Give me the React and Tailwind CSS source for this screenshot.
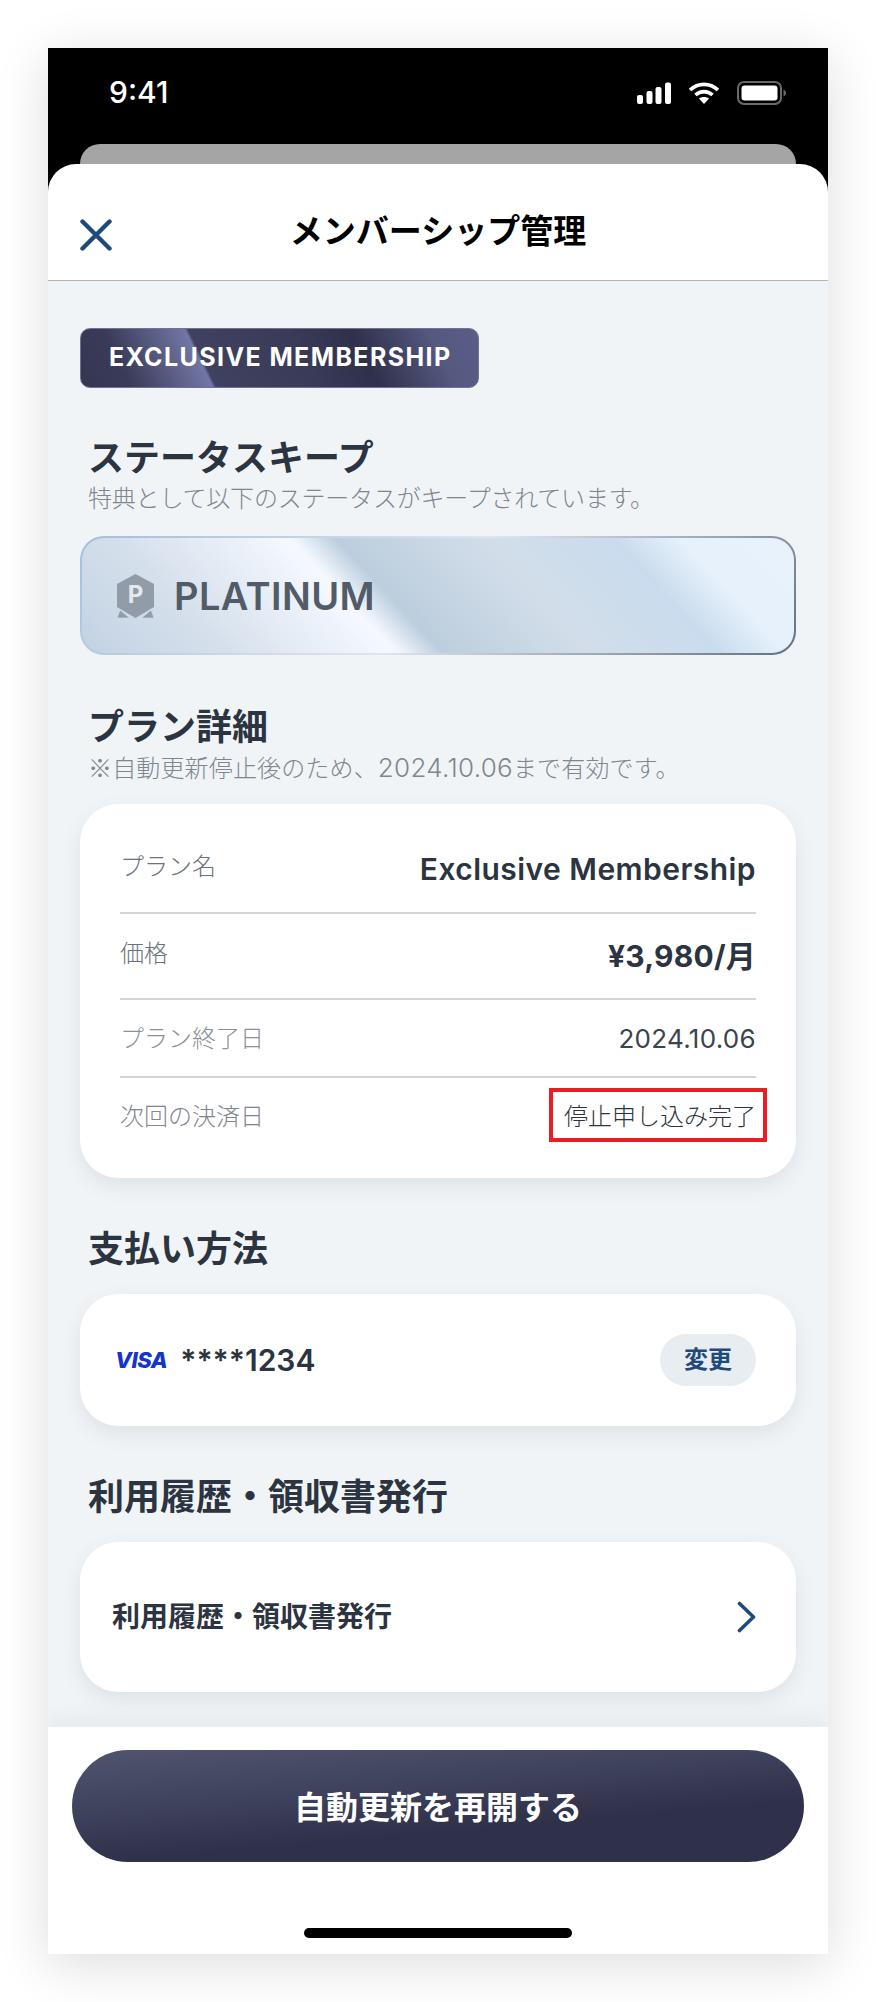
const detailRows = [
  { label: 'プラン名', value: 'Exclusive Membership', row: 'h-[90px] border-b-2', labelCls: 'text-[#6b727a] -mt-[2px]', valueCls: 'text-[30px] font-semibold tracking-[0.45px] text-[#2b3440] mt-[2px]' },
  { label: '価格', value: '¥3,980/月', row: 'h-[86px] border-b-2', labelCls: 'text-[#6b727a] -mt-[4px]', valueCls: 'text-[30px] font-bold tracking-[0.2px] text-[#2b3440]' },
  { label: 'プラン終了日', value: '2024.10.06', row: 'h-[78px] border-b-2', labelCls: 'text-[#8b9199] mt-[1px]', valueCls: 'text-[26px] tracking-[0.3px] text-[#3a434e] mt-[1px]' },
];

function StatusBar() {
  return (
    <div className="h-[96px] flex items-start justify-between pt-[30px] pl-[61px] pr-[42px] text-white">
      <span className="text-[30px] leading-[28px] font-medium">9:41</span>
      <div className="flex items-center gap-[17px] pt-[3px]">
        <svg width="34" height="22" viewBox="0 0 34 22" fill="#fff">
          <rect x="0" y="13" width="6" height="9" rx="2" />
          <rect x="9.5" y="9" width="6" height="13" rx="2" />
          <rect x="18.5" y="5" width="6" height="17" rx="2" />
          <rect x="28" y="0.5" width="6" height="21.5" rx="2" />
        </svg>
        <svg width="32" height="22" viewBox="0 0 32 22" fill="none" stroke="#fff" strokeWidth="3.6">
          <path d="M2 8 C10 0.5 22 0.5 30 8" />
          <path d="M7.5 13 C12.5 8.5 19.5 8.5 24.5 13" />
          <path d="M16 22 L11 16.5 C14 14.5 18 14.5 21 16.5 Z" fill="#fff" stroke="none" />
        </svg>
        <svg width="49" height="24" viewBox="0 0 49 24" fill="none">
          <rect x="1" y="1" width="43" height="22" rx="6" stroke="#6a6a6a" strokeWidth="2" />
          <rect x="4.5" y="4.5" width="36" height="15" rx="3" fill="#fff" />
          <path d="M46.5 8.5 C48 9.5 49 10.5 49 12 C49 13.5 48 14.5 46.5 15.5 Z" fill="#6a6a6a" />
        </svg>
      </div>
    </div>
  );
}

function SectionTitle({ children }) {
  return <h2 className="ml-[8px] text-[36px] leading-[44px] font-bold text-[#2b3440]">{children}</h2>;
}

function Subtitle({ children }) {
  return <p className="ml-[8px] mt-[4px] text-[24px] leading-[30px] font-light tracking-[-0.2px] text-[#7f868e]">{children}</p>;
}

export default function App() {
  return (
    <div className="w-[876px] h-[2002px] bg-white p-[48px] font-['Inter','Noto_Sans_CJK_JP',sans-serif]">
      <div className="w-[780px] h-[1906px] flex flex-col bg-black shadow-[0_10px_50px_rgba(0,0,0,0.14)]">
        <StatusBar />
        <div className="mx-[32px] h-[20px] rounded-t-[20px] bg-[#a5a5a5]" />

        <div className="flex-1 min-h-0 flex flex-col rounded-t-[28px] bg-white overflow-hidden">
          <header className="h-[117px] shrink-0 relative flex items-center justify-center border-b border-[#b0b3ba]">
            <svg className="absolute left-[32px] top-[55px]" width="32" height="32" viewBox="0 0 32 32" fill="none" stroke="#1f4a7c" strokeWidth="4.4" strokeLinecap="round">
              <path d="M2.5 2.5 L29.5 29.5 M29.5 2.5 L2.5 29.5" />
            </svg>
            <h1 className="text-[33px] leading-[44px] font-bold text-black mt-[18px]">メンバーシップ管理</h1>
          </header>

          <main className="flex-1 min-h-0 overflow-hidden bg-[#f1f4f7] px-[32px] pt-[47px]">
            <div className="w-[399px] h-[60px] flex items-center pl-[28px] rounded-[10px] border border-[#6f7296] bg-[linear-gradient(64deg,#353651_0%,#3a3b58_12%,#7276a5_31%,#3f4160_31.8%,#3a3b58_55%,#2f304a_70%,#55587f_88%,#5a5d87_100%)]">
              <span className="text-[25px] font-bold tracking-[1.4px] text-white whitespace-nowrap">EXCLUSIVE MEMBERSHIP</span>
            </div>

            <div className="mt-[48px]">
              <SectionTitle>ステータスキープ</SectionTitle>
              <Subtitle>特典として以下のステータスがキープされています。</Subtitle>
            </div>

            <div className="mt-[22px] h-[119px] rounded-[24px] p-[2px] bg-[linear-gradient(135deg,#a6bed8_0%,#dfe5ec_50%,#606f82_100%)]">
              <div className="h-full flex items-center gap-[20px] pl-[35px] rounded-[22px] bg-[linear-gradient(47deg,#c2d2e3_0%,#d6e0ec_18%,#f5f9ff_38%,#f0f5fc_39%,#bccede_44%,#d2dde9_62%,#c9dcee_78%,#e6f1fb_86%,#e9f2fb_100%)]">
                <svg width="37" height="44" viewBox="0 0 37 44">
                  <path d="M18.5 0 L37 10 L37 33 L18.5 44 L0 33 L0 10 Z" fill="#929ca8" />
                  <path d="M0 44 L3 36 L12.5 44 Z M37 44 L34 36 L24.5 44 Z" fill="#929ca8" stroke="#d6e0ec" strokeWidth="0.6" />
                  <text x="18.5" y="28.5" textAnchor="middle" fontSize="24" fontWeight="700" fill="#e4e9ef">P</text>
                </svg>
                <span className="text-[38px] leading-[44px] font-semibold tracking-[0.4px] text-[#515c68]">PLATINUM</span>
              </div>
            </div>

            <div className="mt-[50px]">
              <SectionTitle>プラン詳細</SectionTitle>
              <div className="-mt-[1px]">
                <Subtitle>
                  <span className="tracking-[0.15px]">
                    <span className="font-['Noto_Sans_CJK_JP']">※</span>自動更新停止後のため、<span className="text-[26px] leading-[20px] tracking-[0.3px]">2024.10.06</span>まで有効です。
                  </span>
                </Subtitle>
              </div>
            </div>

            <section className="mt-[20px] rounded-[38px] bg-white px-[40px] pt-[20px] pb-[22px] shadow-[0_8px_20px_rgba(60,80,100,0.1)]">
              {detailRows.map((r) => (
                <div key={r.label} className={`flex items-center justify-between border-[#d4d4d4] ${r.row}`}>
                  <span className={`text-[24px] leading-[30px] font-light ${r.labelCls}`}>{r.label}</span>
                  <span className={`leading-[36px] ${r.valueCls}`}>{r.value}</span>
                </div>
              ))}
              <div className="h-[78px] flex items-center justify-between">
                <span className="text-[24px] leading-[30px] font-light text-[#7f868e]">次回の決済日</span>
                <span className="relative text-[24px] leading-[30px] font-light text-[#2b3440]">
                  停止申し込み完了
                  <span className="absolute -left-[15px] -right-[11px] -top-[14px] -bottom-[10px] border-[4px] border-[#ed1c24]" />
                </span>
              </div>
            </section>

            <div className="mt-[48px] pt-[1px]">
              <SectionTitle>支払い方法</SectionTitle>
            </div>
            <section className="mt-[23px] h-[132px] flex items-center justify-between rounded-[38px] bg-white pl-[35px] pr-[40px] shadow-[0_8px_20px_rgba(60,80,100,0.1)]">
              <div className="flex items-center gap-[13px]">
                <span className="text-[22px] leading-[24px] font-extrabold italic tracking-[-0.5px] text-[#1434cb]">VISA</span>
                <span className="text-[30px] leading-[36px] font-semibold text-[#2b3440]">****1234</span>
              </div>
              <button className="w-[96px] h-[52px] rounded-full bg-[#e8edf2] text-[24px] font-bold text-[#1f4a7c]">変更</button>
            </section>

            <div className="mt-[48px] pt-[1px]">
              <SectionTitle>利用履歴・領収書発行</SectionTitle>
            </div>
            <section className="mt-[23px] h-[150px] flex items-center justify-between rounded-[38px] bg-white pl-[32px] pr-[40px] shadow-[0_8px_20px_rgba(60,80,100,0.1)]">
              <span className="text-[28px] leading-[36px] font-bold text-[#2b3440]">利用履歴・領収書発行</span>
              <svg width="19" height="32" viewBox="0 0 19 32" fill="none" stroke="#1f4a7c" strokeWidth="3.6" strokeLinecap="round" strokeLinejoin="round">
                <path d="M2.5 2.5 L16.5 16 L2.5 29.5" />
              </svg>
            </section>
          </main>

          <footer className="relative h-[227px] shrink-0 flex flex-col items-center bg-white pt-[23px] shadow-[0_-8px_20px_rgba(60,80,100,0.07)]">
            <button className="w-[732px] h-[112px] pt-[4px] rounded-full bg-[linear-gradient(175deg,#50546e_0%,#3d405b_40%,#2f3049_65%,#2f3049_100%)] text-[32px] font-bold text-white">自動更新を再開する</button>
            <div className="mt-[66px] w-[268px] h-[10px] rounded-full bg-black" />
          </footer>
        </div>
      </div>
    </div>
  );
}
